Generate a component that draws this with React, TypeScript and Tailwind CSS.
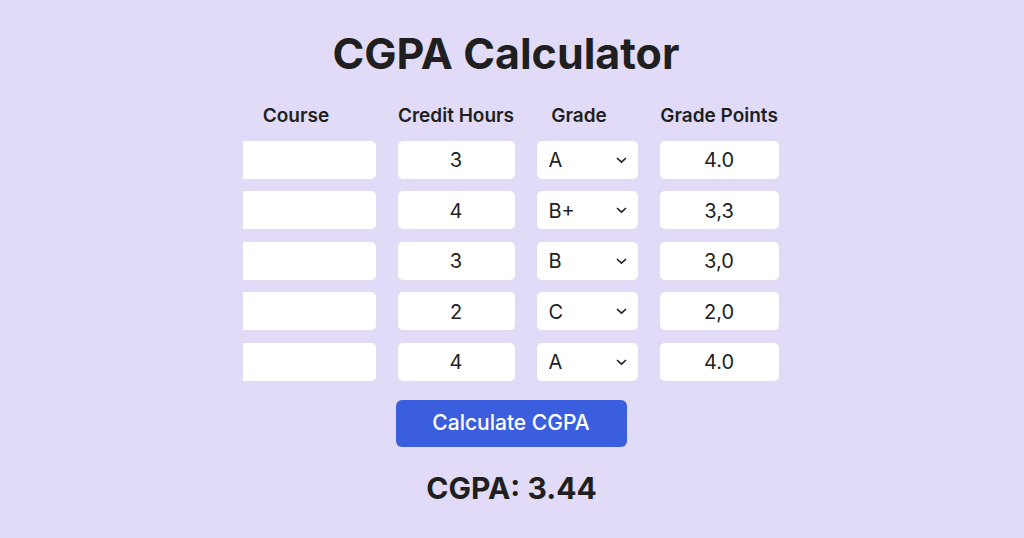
import React, { useState } from 'react';

interface Row {
  course: string;
  credits: string;
  grade: string;
  points: string;
}

const initialRows: Row[] = [
  { course: '', credits: '3', grade: 'A', points: '4.0' },
  { course: '', credits: '4', grade: 'B+', points: '3,3' },
  { course: '', credits: '3', grade: 'B', points: '3,0' },
  { course: '', credits: '2', grade: 'C', points: '2,0' },
  { course: '', credits: '4', grade: 'A', points: '4.0' },
];

const grades = ['A', 'A-', 'B+', 'B', 'B-', 'C+', 'C', 'D', 'F'];

function Chevron() {
  return (
    <svg width="11" height="7" viewBox="0 0 11 7" fill="none" className="text-[#222]">
      <path d="M1.5 1.5 L5.5 5.2 L9.5 1.5" stroke="currentColor" strokeWidth="1.7" strokeLinecap="round" strokeLinejoin="round" />
    </svg>
  );
}

export default function App() {
  const [rows, setRows] = useState<Row[]>(initialRows);
  const [cgpa] = useState('3.44');

  const update = (i: number, key: keyof Row, value: string) => {
    setRows(rows.map((r, idx) => (idx === i ? { ...r, [key]: value } : r)));
  };

  const cell = 'h-[38px] bg-white rounded-[5px] text-[20px] text-[#222] text-center outline-none pt-[1px]';
  const head = 'text-[19px] font-semibold leading-[24px] text-center';

  return (
    <div className="w-full h-[538px] bg-[#e1dbf7] flex flex-col items-center font-['Inter',sans-serif] text-[#1f1f1f]">
      <h1 className="mt-[27px] mr-[12px] text-[43px] leading-[52px] font-bold">CGPA Calculator</h1>

      <div className="mt-[25px] mr-[3px] grid grid-cols-[133px_117px_101px_119px] gap-x-[22px] gap-y-[12.5px]">
        <div className={head + ' pr-[26px] -mb-[1px]'}>Course</div>
        <div className={head}>Credit Hours</div>
        <div className={head + ' pr-[16px]'}>Grade</div>
        <div className={head}>Grade Points</div>

        {rows.map((r, i) => (
          <React.Fragment key={i}>
            <input
              className={cell + ' rounded-l-none'}
              value={r.course}
              onChange={(e) => update(i, 'course', e.target.value)}
            />
            <input
              className={cell}
              value={r.credits}
              onChange={(e) => update(i, 'credits', e.target.value)}
            />
            <div className="relative h-[38px] bg-white rounded-[5px]">
              <select
                className="w-full h-full appearance-none bg-transparent pl-[12px] pt-[1px] text-[20px] text-[#222] outline-none"
                value={r.grade}
                onChange={(e) => update(i, 'grade', e.target.value)}
              >
                {grades.map((g) => (
                  <option key={g} value={g}>{g}</option>
                ))}
              </select>
              <div className="absolute right-[11px] top-[16px] pointer-events-none">
                <Chevron />
              </div>
            </div>
            <input
              className={cell}
              value={r.points}
              onChange={(e) => update(i, 'points', e.target.value)}
            />
          </React.Fragment>
        ))}
      </div>

      <button className="mt-[19px] mr-[2px] w-[231px] h-[47px] bg-[#3b5edf] rounded-[6px] text-white text-[21px] font-medium">
        Calculate CGPA
      </button>

      <div className="mt-[22px] mr-[1px] text-[30px] font-bold leading-[38px]">CGPA: {cgpa}</div>
    </div>
  );
}
